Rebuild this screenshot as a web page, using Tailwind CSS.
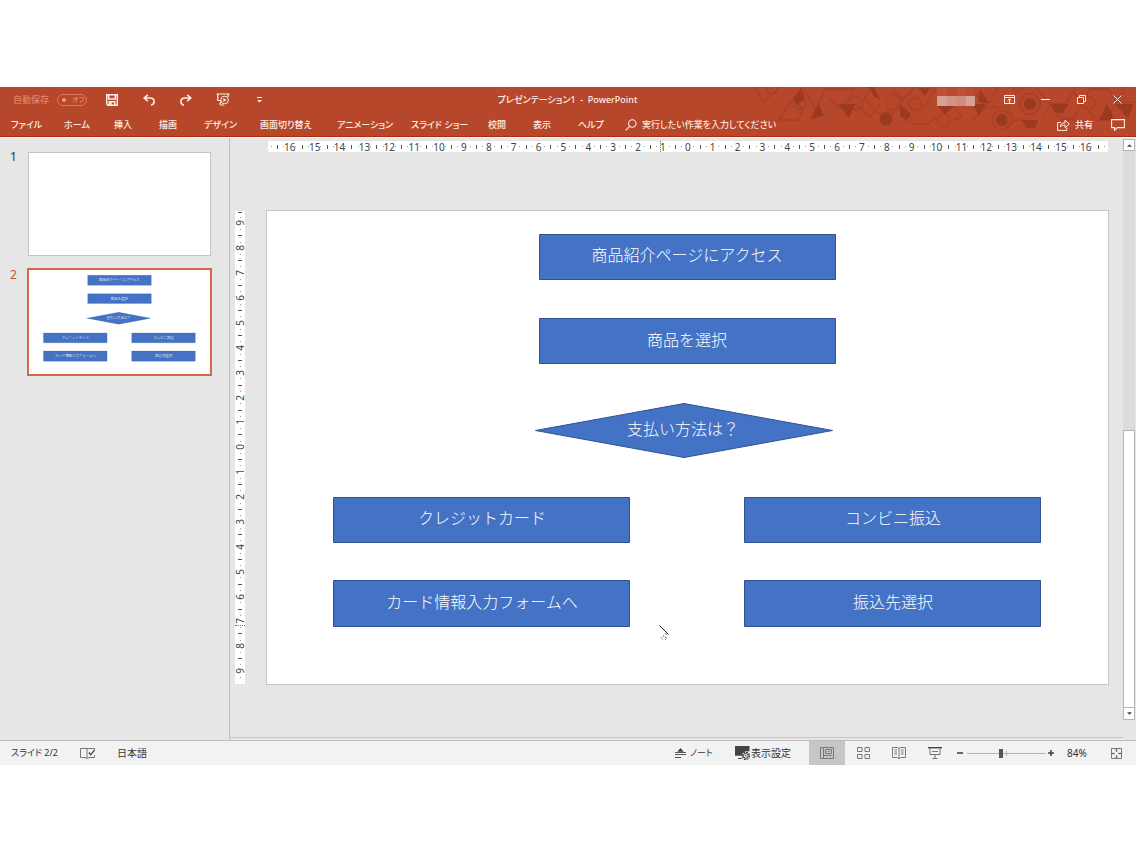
<!DOCTYPE html>
<html lang="ja">
<head>
<meta charset="utf-8">
<title>プレゼンテーション1 - PowerPoint</title>
<script src="https://cdn.jsdelivr.net/npm/@tailwindcss/browser@4"></script>
</head>
<body class="bg-white">
<div class="flex h-screen min-h-[640px] flex-col py-[87px] font-['Noto_Sans','Noto_Sans_CJK_JP',sans-serif] text-[10px] text-[#333] [font-feature-settings:'palt']">

  <header class="relative h-[50px] shrink-0 border-b border-[#b02c0e] bg-[#b7472a] text-[9px] font-medium text-[#fdeee9]">
    <svg class="absolute top-0 right-0 h-[49px] w-[396px]" viewBox="0 9 1188 147" aria-hidden="true">
      <g fill="none" stroke="#a93f25" stroke-width="4">
        <path d="M45 9 70 55 105 22M120 100 160 45 190 75 175 108H115zM190 15 230 75 255 15H300L345 15 305 75 260 40M345 60 390 100 420 60M390 9 375 45 410 85 460 85 490 45 460 20M490 45 525 9M495 70 520 120H565L590 95M545 78 590 9M640 65 665 100 640 108M700 108 740 70 700 20M740 70H800L830 25 815 9M800 70 825 108 800 135M745 60 775 9M825 108H850M830 25 855 9M890 12 930 60 905 105M930 60H975L1010 9M935 62 960 105H1000L1025 60 1000 22M1000 105 1020 130M1025 60 1050 15H1105L1130 55 1105 100H1060L1030 62M1130 55H1188M1130 55 1155 9M1060 100 1045 120M1105 100 1118 118"/>
        <circle cx="95" cy="12" r="17"/><circle cx="180" cy="58" r="18"/><circle cx="348" cy="58" r="20"/><circle cx="460" cy="55" r="23"/><circle cx="525" cy="60" r="19"/><circle cx="611" cy="108" r="18"/><circle cx="785" cy="108" r="28"/><circle cx="870" cy="60" r="31"/><circle cx="1045" cy="58" r="20"/>
      </g>
      <g fill="#9c3a21">
        <path d="M160 40 185 12 195 48 170 62zM235 58 252 95 210 106zM295 60H346L326 103zM385 9H402L422 48 405 40zM480 62 512 90 500 112 480 95zM535 12H570L555 35zM590 65H642L615 92zM720 15 748 58 715 55zM698 60H737L716 95zM846 108H895L885 132H858zM932 60H985L970 86H945zM1077 110 1100 60 1125 108zM1125 60H1180L1165 105z"/>
        <circle cx="438" cy="105" r="19"/><circle cx="785" cy="108" r="18"/><circle cx="870" cy="60" r="18"/>
      </g>
    </svg>

    <div class="relative flex h-[25px] items-center">
      <div class="flex h-full flex-1 items-center">
        <label class="flex w-[94px] items-center gap-[8px] pl-[13px] text-[9px] text-[#e2836a]">自動保存
          <span class="relative flex h-[12px] w-[30px] items-center rounded-full border border-[#dc795f]">
            <input type="checkbox" class="absolute inset-0 appearance-none" aria-label="自動保存">
            <span class="ml-[4px] size-[4px] rounded-full bg-[#ee9c86]"></span><span class="ml-[6px] text-[7px] leading-none">オフ</span>
          </span>
        </label>
        <button class="flex h-full w-[36px] items-center justify-center" aria-label="上書き保存"><svg class="size-[12px]" viewBox="0 0 12 12" fill="none" stroke="currentColor" stroke-width="1.500"><path d="M.7.7h10.6v10.6H2L.7 10zM2.700 1v4h6.600V1M3.300 11V7.800h5.400V11M5 8v3"/></svg></button>
        <button class="flex h-full w-[38px] items-center justify-center" aria-label="元に戻す"><svg class="size-[12px]" viewBox="0 0 12 12" fill="none" stroke="currentColor" stroke-width="1.600"><path d="M4.800.8 1.200 4l3.600 3.200M1.500 4H7c5.500 0 5 6.500 1 7.200"/></svg></button>
        <button class="flex h-full w-[36px] items-center justify-center" aria-label="やり直し"><svg class="size-[12px]" viewBox="0 0 12 12" fill="none" stroke="currentColor" stroke-width="1.600"><path d="M7.200.8 10.800 4 7.200 7.200M10.500 4H5c-5.500 0-5 6.500-1 7.200"/></svg></button>
        <button class="flex h-full w-[38px] items-center justify-center" aria-label="最初から開始"><svg class="h-[13px] w-[14px]" viewBox="0 0 14 13" fill="none" stroke="currentColor"><path d="M.5 1h13M1.800 1v6.500H5M12.200 1v3M5.500 8 3.500 11.500M4 12h4" stroke-width="1.200"/><circle cx="8.600" cy="7" r="3.800"/><path d="M7.400 5v4l3.100-2z" fill="currentColor" stroke="none"/></svg></button>
        <button class="flex h-full w-[34px] items-center justify-center" aria-label="クイック アクセス ツール バーのユーザー設定"><svg class="h-[6px] w-[5px]" viewBox="0 0 5 6" fill="currentColor"><path d="M0 0h5v1H0zM0 3h5L2.500 5.500z"/></svg></button>
      </div>
      <h1 class="whitespace-pre">プレゼンテーション1  -  PowerPoint</h1>
      <div class="flex h-full flex-1 items-center justify-end pr-px">
        <svg class="mr-[16px] h-[19px] w-[38px] self-start" viewBox="0 0 38 19" aria-label="アカウント"><path fill="#bd5238" d="M0 0h38v9H0z"/><path fill="#b94c30" d="M10 0h10v9H10zM29 0h9v9h-9z"/><path fill="#d8a092" d="M0 9h10v10H0z"/><path fill="#d19485" d="M10 9h9v10h-9z"/><path fill="#cf8d7e" d="M19 9h10v10H19z"/><path fill="#d7a195" d="M29 9h9v10h-9z"/></svg>
        <button class="flex h-full w-[36px] items-center justify-center" aria-label="リボンの表示オプション"><svg class="h-[9px] w-[11px]" viewBox="0 0 11 9" fill="none" stroke="currentColor"><path d="M.5.5h10v8H.5zM.5 2.500h10M5.500 8V4M3.500 5.700l2-1.900 2 1.900"/></svg></button>
        <button class="flex h-full w-[36px] items-center justify-center" aria-label="最小化"><svg class="h-[9px] w-[9px]" viewBox="0 0 9 9" stroke="currentColor"><path d="M0 4.500h9"/></svg></button>
        <button class="flex h-full w-[36px] items-center justify-center" aria-label="元に戻す（縮小）"><svg class="size-[9px]" viewBox="0 0 9 9" fill="none" stroke="currentColor"><path d="M.5 2.500h6v6h-6zM2.500 2V.5h6v6H7"/></svg></button>
        <button class="flex h-full w-[36px] items-center justify-center" aria-label="閉じる"><svg class="size-[9px]" viewBox="0 0 9 9" stroke="currentColor"><path d="m.5.5 8 8M8.500.5l-8 8"/></svg></button>
      </div>
    </div>

    <nav class="relative flex h-[24px] items-center pt-[2px] pl-[11px] text-left whitespace-nowrap" aria-label="リボン">
      <button class="w-[53px] text-left">ファイル</button>
      <button class="w-[50px] text-left">ホーム</button>
      <button class="w-[45px] text-left">挿入</button>
      <button class="w-[45px] text-left">描画</button>
      <button class="w-[56px] text-left">デザイン</button>
      <button class="w-[77px] text-left">画面切り替え</button>
      <button class="w-[74px] text-left">アニメーション</button>
      <button class="w-[77px] text-left">スライド ショー</button>
      <button class="w-[45px] text-left">校閲</button>
      <button class="w-[45px] text-left">表示</button>
      <button class="w-[47px] text-left">ヘルプ</button>
      <label class="flex items-center gap-[5px]">
        <svg class="size-[12px]" viewBox="0 0 12 12" fill="none" stroke="currentColor" stroke-width="1.100"><circle cx="7.300" cy="4.500" r="3.700"/><path d="M4.700 7.200.6 11.400"/></svg>
        <input type="text" class="w-[160px] bg-transparent outline-none placeholder:text-[#fbe3dc]" placeholder="実行したい作業を入力してください" aria-label="操作アシスト">
      </label>
      <button class="ml-auto flex w-[54px] items-center gap-[5px]">
        <svg class="h-[12px] w-[13px]" viewBox="0 0 13 12" fill="none" stroke="currentColor"><path d="M4 3.500H.6v7.900h9.200V8.500M3.200 8C3.500 5 5.500 3.800 8 3.800V1.200L12.300 5 8 8.600V6C6 6 4.300 6.500 3.200 8z"/></svg>共有</button>
      <button class="w-[25px]" aria-label="コメント"><svg class="h-[12px] w-[14px]" viewBox="0 0 14 12" fill="none" stroke="currentColor" stroke-width="1.100"><path d="M.6.6h12.800v8H6.200l-2.700 2.700V8.600H.6z"/></svg></button>
    </nav>
  </header>

  <div class="flex min-h-0 flex-1 border-t border-b border-t-[#f6f0ee] border-b-[#bdbdbd] bg-[#e6e6e6]">
    <aside class="w-[230px] shrink-0 border-r border-[#bfbfbf] pt-[14px] text-[12px]" aria-label="スライド一覧">
      <ol class="flex flex-col gap-[12px]">
        <li class="flex gap-[10px] pl-[10px]"><span class="h-4 w-[8px] leading-[10px]">1</span>
          <svg class="h-[104px] w-[183px] border border-[#c4c4c4] bg-white" aria-label="スライド 1"></svg></li>
        <li class="flex gap-[9px] pl-[10px] text-[#c9553a]"><span class="h-4 w-[8px] leading-[14px]">2</span>
          <svg class="h-[108px] w-[185px] border-2 border-[#d6674d] bg-white" viewBox="0 0 843 475" preserveAspectRatio="none" aria-label="スライド 2"><use href="#flow"/></svg></li>
      </ol>
    </aside>

    <main class="flex min-w-0 flex-1">
      <div class="mb-[2px] flex min-w-0 flex-1 flex-col border-b border-[#c4c4c4]">
        <div id="hruler" class="relative mt-[3px] mr-[15px] ml-[38px] flex h-[11px] items-center bg-white text-[10px] leading-none text-[#444] [&>*]:flex [&>*]:min-w-0 [&>*]:flex-1 [&>*]:justify-center"></div>
        <div class="mt-[58px] mr-[14px] ml-[5px] flex items-start gap-[21px]">
          <div id="vruler" class="relative mt-px flex h-[473px] w-[10px] shrink-0 flex-col items-center bg-white pb-[3px] text-[10px] leading-none text-[#444] [&>*]:flex [&>*]:min-h-0 [&>*]:flex-1 [&>*]:items-center"></div>
          <svg class="min-w-0 flex-1 bg-white outline -outline-offset-1 outline-[#c6c6c6]" viewBox="0 0 843 475" role="img" aria-label="フローチャート">
            <g id="flow">
              <g fill="#4472c4" stroke="#2f528f">
                <path d="M273.500 24.500h296v45h-296zM273.500 108.500h296v45h-296zM269.500 220.500 418 193.500 566.500 220.500 418 247.500zM67.500 287.500h296v45h-296zM478.500 287.500h296v45h-296zM67.500 370.500h296v46h-296zM478.500 370.500h296v46h-296z"/>
              </g>
              <g class="font-['Noto_Sans_CJK_JP',sans-serif] text-[16px] font-light [font-feature-settings:normal]" fill="#fff" text-anchor="middle">
                <text x="421" y="51">商品紹介ページにアクセス</text>
                <text x="421" y="136">商品を選択</text>
                <text x="417" y="225">支払い方法は？</text>
                <text x="216" y="314">クレジットカード</text>
                <text x="627" y="314">コンビニ振込</text>
                <text x="216" y="398">カード情報入力フォームへ</text>
                <text x="627" y="398">振込先選択</text>
              </g>
            </g>
            <g fill="none" stroke="#222"><path d="m393.500 415.500 9 9"/><path d="m395 427 2 3M397 425l1 2 3 1-2 2M400 423v3" stroke="#777" stroke-dasharray="2 1"/></g>
          </svg>
        </div>
      </div>
      <div class="mt-px mr-px mb-[20px] flex w-[12px] shrink-0 flex-col bg-[#dcdcdc]" aria-label="垂直スクロール">
        <button class="flex h-[12px] shrink-0 items-center justify-center border border-[#b5b5b5] bg-white" aria-label="上へ"><svg class="h-[3px] w-[5px]" viewBox="0 0 6 3"><path d="M0 3h6L3 0z" fill="#444"/></svg></button>
        <div class="flex-1"></div>
        <div class="h-[278px] border border-[#b5b5b5] bg-white"></div>
        <button class="flex h-[12px] shrink-0 items-center justify-center border border-t-0 border-[#b5b5b5] bg-white" aria-label="下へ"><svg class="h-[3px] w-[5px]" viewBox="0 0 6 3"><path d="M0 0h6L3 3z" fill="#444"/></svg></button>
      </div>
    </main>
  </div>

  <footer class="flex h-[24px] shrink-0 items-center bg-[#f2f2f2] pr-[3px] pl-[11px] whitespace-nowrap text-[#333]">
    <span class="w-[69px] text-[9px]">スライド 2/2</span>
    <button class="w-[37px]" aria-label="スペル チェック"><svg class="h-[12px] w-[15px]" viewBox="0 0 15 12" fill="none" stroke="#777"><path d="M7 1.500H.5v9H5l2 1 2-1h5.500V8M7 1.500v10M7 1.500h7.500V3"/><path d="m8.800 5.500 1.900 2.200 3.800-4.500" stroke="#444" stroke-width="1.300"/></svg></button>
    <button>日本語</button>
    <button class="ml-auto flex w-[60px] items-center gap-[4px] text-[9px]"><svg class="h-[10px] w-[11px]" viewBox="0 0 11 10" stroke="#555"><path d="M3 3.300 5.500.5 8 3.300z" fill="#444"/><path d="M0 4.500h11M0 6.500h11M0 9.500h6"/></svg>ノート</button>
    <button class="flex w-[74px] items-center gap-px"><svg class="h-[14px] w-[15px]" viewBox="0 0 15 14"><path d="M0 0h14.500v5.500L11 5 7 7.500v2.300H0zM3 12h3.500v1H3z" fill="#444"/><circle cx="10.800" cy="9.800" r="3.600" fill="none" stroke="#444" stroke-width="1.300" stroke-dasharray="1.900 .9"/><circle cx="10.800" cy="9.800" r="2.400" fill="#f2f2f2" stroke="#444"/><circle cx="10.800" cy="9.800" r=".8" fill="#444"/></svg>表示設定</button>
    <button class="flex h-full w-[36px] items-center justify-center bg-[#c6c6c6]" aria-label="標準"><svg class="h-[12px] w-[14px]" viewBox="0 0 14 12" fill="none" stroke="#777"><path d="M.5.5h13v11H.5zM3.500.5v11M5.500 2.500h6v4h-6zM7.500 4.500h2M3.500 8.500h8"/></svg></button>
    <button class="flex h-full w-[36px] items-center justify-center" aria-label="スライド一覧"><svg class="h-[12px] w-[13px]" viewBox="0 0 13 12" fill="none" stroke="#777"><path d="M.5.5h4.500v4H.5zM8 .5h4.500v4H8zM.5 7.500h4.500v4H.5zM8 7.500h4.500v4H8z"/></svg></button>
    <button class="flex h-full w-[36px] items-center justify-center" aria-label="閲覧表示"><svg class="h-[13px] w-[14px]" viewBox="0 0 14 13" fill="none" stroke="#777"><path d="M7 1.500 5.500.5h-5v10h5L7 12l1.500-1.500h5V.5h-5zM7 1.500V12M2.500 3h2.500M2.500 5h2.500M2.500 7h2.500M9 3h2.500M9 5h2.500M9 7h2.500"/></svg></button>
    <button class="flex h-full w-[36px] items-center justify-center" aria-label="スライド ショー"><svg class="h-[12px] w-[14px]" viewBox="0 0 14 12" fill="none" stroke="#777"><path d="M0 .7h14" stroke="#444" stroke-width="1.400"/><path d="M2 1v6.500h10V1M4 4.500h6M7 7.500v4M4.500 11.500h5"/></svg></button>
    <button class="flex h-full w-[14px] items-center justify-center" aria-label="縮小"><svg class="size-[6px]" viewBox="0 0 6 6" stroke="#444" stroke-width="1.600"><path d="M0 3h6"/></svg></button>
    <input type="range" min="0" max="100" value="42" aria-label="ズーム" class="h-[12px] w-[79px] appearance-none bg-[linear-gradient(#b4b4b4,#b4b4b4),linear-gradient(#b4b4b4,#b4b4b4)] bg-[length:100%_1px,1px_5px] bg-center bg-no-repeat [&::-webkit-slider-thumb]:h-[9px] [&::-webkit-slider-thumb]:w-[4px] [&::-webkit-slider-thumb]:appearance-none [&::-webkit-slider-thumb]:bg-[#555]">
    <button class="flex h-full w-[9px] items-center justify-center" aria-label="拡大"><svg class="size-[6px]" viewBox="0 0 6 6" stroke="#444" stroke-width="1.600"><path d="M0 3h6M3 0v6"/></svg></button>
    <button class="ml-[12px] w-[32px] text-left">84%</button>
    <button class="flex h-full w-[34px] items-center justify-center" aria-label="ウィンドウに合わせる"><svg class="size-[11px]" viewBox="0 0 11 11" fill="none" stroke="#777"><path d="M.5.5h10v10H.5z"/><path d="M5.500 1v3M5.500 7v3M1 5.500h3M7 5.500h3" stroke-width="1.200"/><path d="M4 2.500 5.500 1 7 2.500M4 8.500 5.500 10 7 8.500M2.500 4 1 5.500 2.500 7M8.500 4 10 5.500 8.500 7" stroke-width=".6"/></svg></button>
  </footer>
</div>

<script>
  // Builds a centimetre scale: every unit is a number with quarter dots and a half-unit tick.
  const dot = '<i><b class="size-px bg-[#999]"></b></i>';
  const range = n => Array.from({ length: 2 * n + 1 }, (_, i) => Math.abs(i - n));

  const hTick = '<i><b class="h-[4px] w-px bg-[#555]"></b></i>';
  document.getElementById('hruler').innerHTML =
    range(16).map(n => dot + hTick + dot + '<span>' + n + '</span>').join('') + dot + hTick + dot +
    '<em class="absolute inset-y-0 border-l border-dotted border-[#777]" style="left:46.7%"></em>';

  const vTick = '<i><b class="h-px w-[4px] bg-[#555]"></b></i>';
  document.getElementById('vruler').innerHTML =
    range(9).map(n => vTick + dot + '<span><span class="-rotate-90">' + n + '</span></span>' + dot).join('') +
    '<em class="absolute inset-x-0 border-t border-dotted border-[#777]" style="top:87.5%"></em>';
  document.getElementById('vruler').firstElementChild.style.flexGrow = 0.5;
</script>
</body>
</html>
